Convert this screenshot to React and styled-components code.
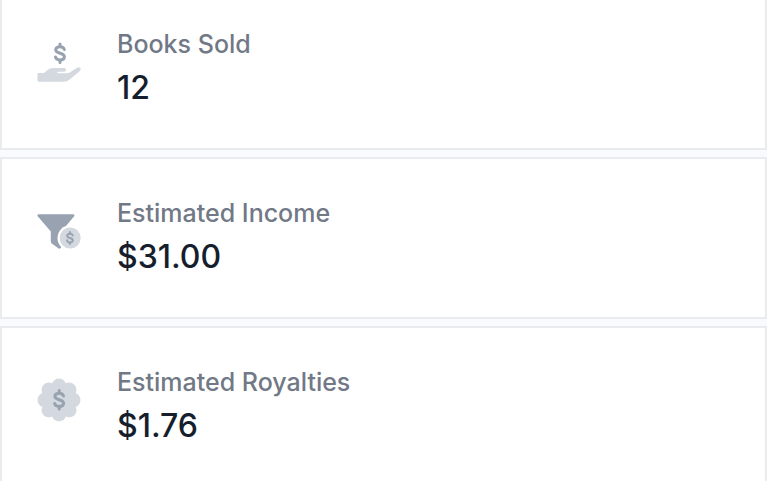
import React from "react";
import styled, { createGlobalStyle } from "styled-components";

const GlobalStyle = createGlobalStyle`
  * { box-sizing: border-box; }
  body {
    margin: 0;
    background: #f8fafc;
    font-family: Inter, "Liberation Sans", sans-serif;
  }
`;

const Viewport = styled.main`
  height: 100vh;
  overflow: hidden;
`;

const StatList = styled.dl`
  display: flex;
  flex-direction: column;
  gap: 7px;
  margin: -12px 0 0;
`;

const StatCard = styled.div`
  display: flex;
  align-items: flex-start;
  gap: 36px;
  padding: 36px 35px 34px;
  background: #ffffff;
  border: 2px solid #e9ebee;
`;

const StatIcon = styled.svg`
  flex: none;
  width: 44px;
  height: 44px;
  margin-top: 14px;
`;

const StatText = styled.div`
  min-width: 0;
`;

const Label = styled.dt`
  color: #717886;
  font-size: 25px;
  font-weight: 500;
  line-height: 36px;
`;

const Value = styled.dd`
  margin: 0;
  color: #161e2d;
  font-size: 32px;
  font-weight: 500;
  line-height: 52px;
`;

const DARK = "#98a2b0";
const LIGHT = "#d4d8df";

function Dollar({ x, y, scale = 1 }) {
  return (
    <path
      transform={`translate(${x} ${y}) scale(${scale})`}
      d="M0-9.3V-7M0 7V9.3M4.3-3.8C3.8-5.8 2.3-6.6 0-6.6C-2.6-6.6-4.3-5.5-4.3-3.6C-4.3-1.4-2.2-.7 0-.1C2.6.6 4.4 1.3 4.4 3.5C4.4 5.6 2.7 6.7 0 6.7C-2.6 6.7-4.2 5.7-4.5 3.6"
      fill="none"
      stroke={DARK}
      strokeWidth="3"
      strokeLinecap="round"
    />
  );
}

function HandIcon() {
  return (
    <StatIcon viewBox="0 0 44 44" aria-hidden="true">
      <Dollar x={23} y={13.3} />
      <path
        fill={LIGHT}
        d="M1.5 33H7L10.5 29.9Q12.8 28 16 28H27Q29 28.1 29 30Q28.8 31.6 26.8 31.7H21Q20.2 31.9 20.2 32.4Q20.3 33.2 21.2 33.2H29.5Q32 33.2 34 31.7L39.6 27.9Q42.2 26.5 43.4 28Q44.4 29.6 42.5 31.3L33.3 39.1Q30.6 41.8 27 41.8H1.7Q.5 41.8 .5 40.6V34Q.5 33 1.5 33Z"
      />
    </StatIcon>
  );
}

function FunnelIcon() {
  return (
    <StatIcon viewBox="0 0 44 44" aria-hidden="true">
      <path
        fill={DARK}
        d="M1.9 5.2H35.9Q38 5.4 37.2 7.2L24.2 22.6V38Q23.6 40.3 21.6 39.6L14.8 34.4Q13.8 33.5 13.8 32.3V22.6L.7 7.2Q-.1 5.4 1.9 5.2Z"
      />
      <circle cx="33.2" cy="29" r="12.7" fill="#ffffff" />
      <circle cx="33.2" cy="29" r="10.5" fill={LIGHT} />
      <Dollar x={33} y={29} scale={0.65} />
    </StatIcon>
  );
}

const LOBES = [
  [36.2, 22], [32.2, 32.2], [22, 36.2], [11.8, 32.2],
  [7.8, 22], [11.8, 11.8], [22, 7.8], [32.2, 11.8],
];

function BadgeIcon() {
  return (
    <StatIcon viewBox="0 0 44 44" aria-hidden="true">
      <g fill={LIGHT}>
        <circle cx="22" cy="22" r="17.5" />
        {LOBES.map(([cx, cy]) => (
          <circle key={`${cx}-${cy}`} cx={cx} cy={cy} r="7.3" />
        ))}
      </g>
      <Dollar x={22.2} y={21.8} />
    </StatIcon>
  );
}

const STATS = [
  { label: "Books Sold", value: "12", Icon: HandIcon },
  { label: "Estimated Income", value: "$31.00", Icon: FunnelIcon },
  { label: "Estimated Royalties", value: "$1.76", Icon: BadgeIcon },
];

export default function App() {
  return (
    <Viewport>
      <GlobalStyle />
      <StatList>
        {STATS.map(({ label, value, Icon }) => (
          <StatCard key={label}>
            <Icon />
            <StatText>
              <Label>{label}</Label>
              <Value>{value}</Value>
            </StatText>
          </StatCard>
        ))}
      </StatList>
    </Viewport>
  );
}
